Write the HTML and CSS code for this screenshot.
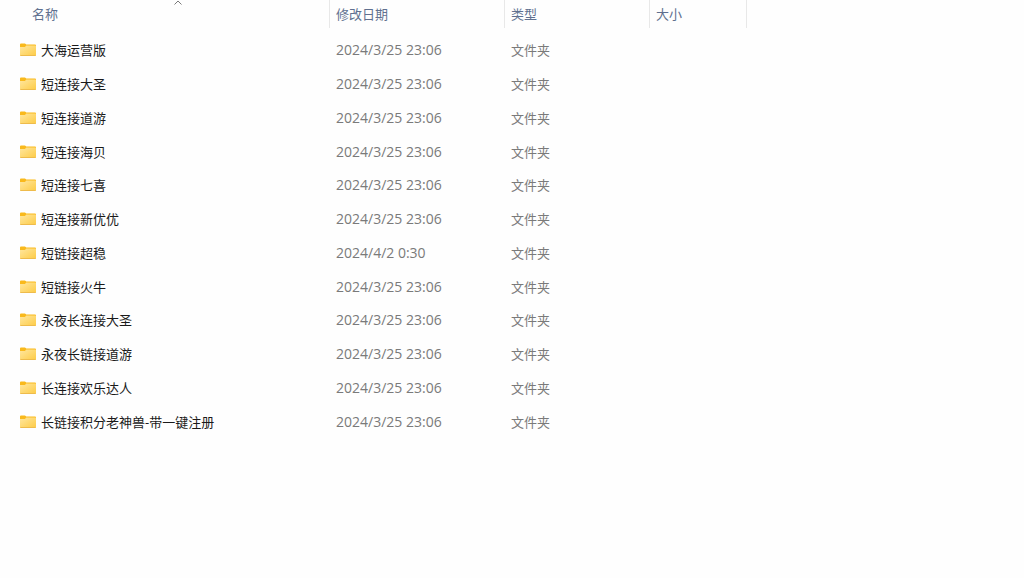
FILE: index.html
```html
<!DOCTYPE html>
<html lang="zh-CN">
<head>
  <meta charset="UTF-8" />
  <meta name="viewport" content="width=device-width, initial-scale=1.0" />
  <title>文件夹</title>
  <link rel="stylesheet" href="styles.css">
</head>
<body>

  <!-- Folder icon shared by all rows -->
  <svg class="defs" width="0" height="0" aria-hidden="true">
    <defs>
      <linearGradient id="front" x1="0" y1="0" x2="1" y2="1">
        <stop offset="0" stop-color="#ffe7a0" />
        <stop offset="1" stop-color="#fdcb45" />
      </linearGradient>
      <symbol id="folder" viewBox="0 0 16 14">
        <path d="M0 1.5Q0 .5 1 .5H4.8Q5.4 .5 5.7 1L6.2 1.6H15Q16 1.6 16 2.6V6H0Z" fill="#f9b91c" />
        <path d="M0 4H5L6.2 2.4H15.2Q16 2.4 16 3.2V12.2Q16 13 15.2 13H.8Q0 13 0 12.2Z" fill="url(#front)" />
        <path d="M.4 12.5H15.6" stroke="#eebb4c" />
      </symbol>
    </defs>
  </svg>

  <table class="files">
    <colgroup>
      <col class="col-name">
      <col class="col-date">
      <col class="col-type">
      <col class="col-size">
      <col>
    </colgroup>
    <thead>
      <tr>
        <th class="name" aria-sort="ascending">
          <button type="button">名称
            <svg class="sort" viewBox="0 0 8 5" aria-hidden="true"><path d="M.5 4.5L4 1L7.5 4.5" /></svg>
          </button>
        </th>
        <th><button type="button">修改日期</button></th>
        <th><button type="button">类型</button></th>
        <th><button type="button">大小</button></th>
        <td></td>
      </tr>
    </thead>
    <tbody id="rows"></tbody>
  </table>

  <script>
    const folders = [
      ['大海运营版', '2024/3/25 23:06'],
      ['短连接大圣', '2024/3/25 23:06'],
      ['短连接道游', '2024/3/25 23:06'],
      ['短连接海贝', '2024/3/25 23:06'],
      ['短连接七喜', '2024/3/25 23:06'],
      ['短连接新优优', '2024/3/25 23:06'],
      ['短链接超稳', '2024/4/2 0:30'],
      ['短链接火牛', '2024/3/25 23:06'],
      ['永夜长连接大圣', '2024/3/25 23:06'],
      ['永夜长链接道游', '2024/3/25 23:06'],
      ['长连接欢乐达人', '2024/3/25 23:06'],
      ['长链接积分老神兽-带一键注册', '2024/3/25 23:06']
    ];

    document.getElementById('rows').innerHTML = folders.map(([name, date]) => `
      <tr>
        <td class="name"><div class="entry"><svg class="icon" aria-hidden="true"><use href="#folder" /></svg>${name}</div></td>
        <td class="date">${date}</td>
        <td>文件夹</td>
        <td></td>
        <td></td>
      </tr>`).join('');
  </script>

</body>
</html>
```
FILE: styles.css
```css
body {
  margin: 0;
  background: #fefefe;
  font-family: "Open Sans", "Noto Sans CJK SC", sans-serif;
  font-size: 13px;
  line-height: 20px;
  color: #7a7a7a;
}

.defs {
  position: absolute;
}

.files {
  width: 100%;
  table-layout: fixed;
  border-collapse: separate;
  border-spacing: 0;
}

.col-name { width: 330px; }
.col-date { width: 175px; }
.col-type { width: 145px; }
.col-size { width: 97px; }

th {
  height: 28px;
  padding: 0;
  border-right: 1px solid #e8e8e8;
}

th.name {
  padding-left: 26px;
}

th button {
  position: relative;
  display: block;
  width: 100%;
  height: 28px;
  padding: 0 6px;
  border: 0;
  background: none;
  font: inherit;
  font-weight: 400;
  text-align: left;
  color: #60708f;
}

.sort {
  position: absolute;
  top: 0;
  left: 50%;
  width: 8px;
  height: 5px;
  margin-left: -4px;
  fill: none;
  stroke: #7a7a7a;
}

/* gap between the header and the first row */
tbody::before {
  content: "";
  display: table-row;
  height: 5px;
}

td {
  padding: 0 6px;
  white-space: nowrap;
}

tbody tr {
  height: 34px;
}

tbody tr:nth-child(4n) {
  height: 33px;
}

td.name {
  padding-left: 20px;
  color: #1a1a1a;
}

td.date {
  font-size: 14px;
}

.entry {
  display: flex;
  align-items: center;
  gap: 5px;
}

.icon {
  width: 16px;
  height: 14px;
}
```
